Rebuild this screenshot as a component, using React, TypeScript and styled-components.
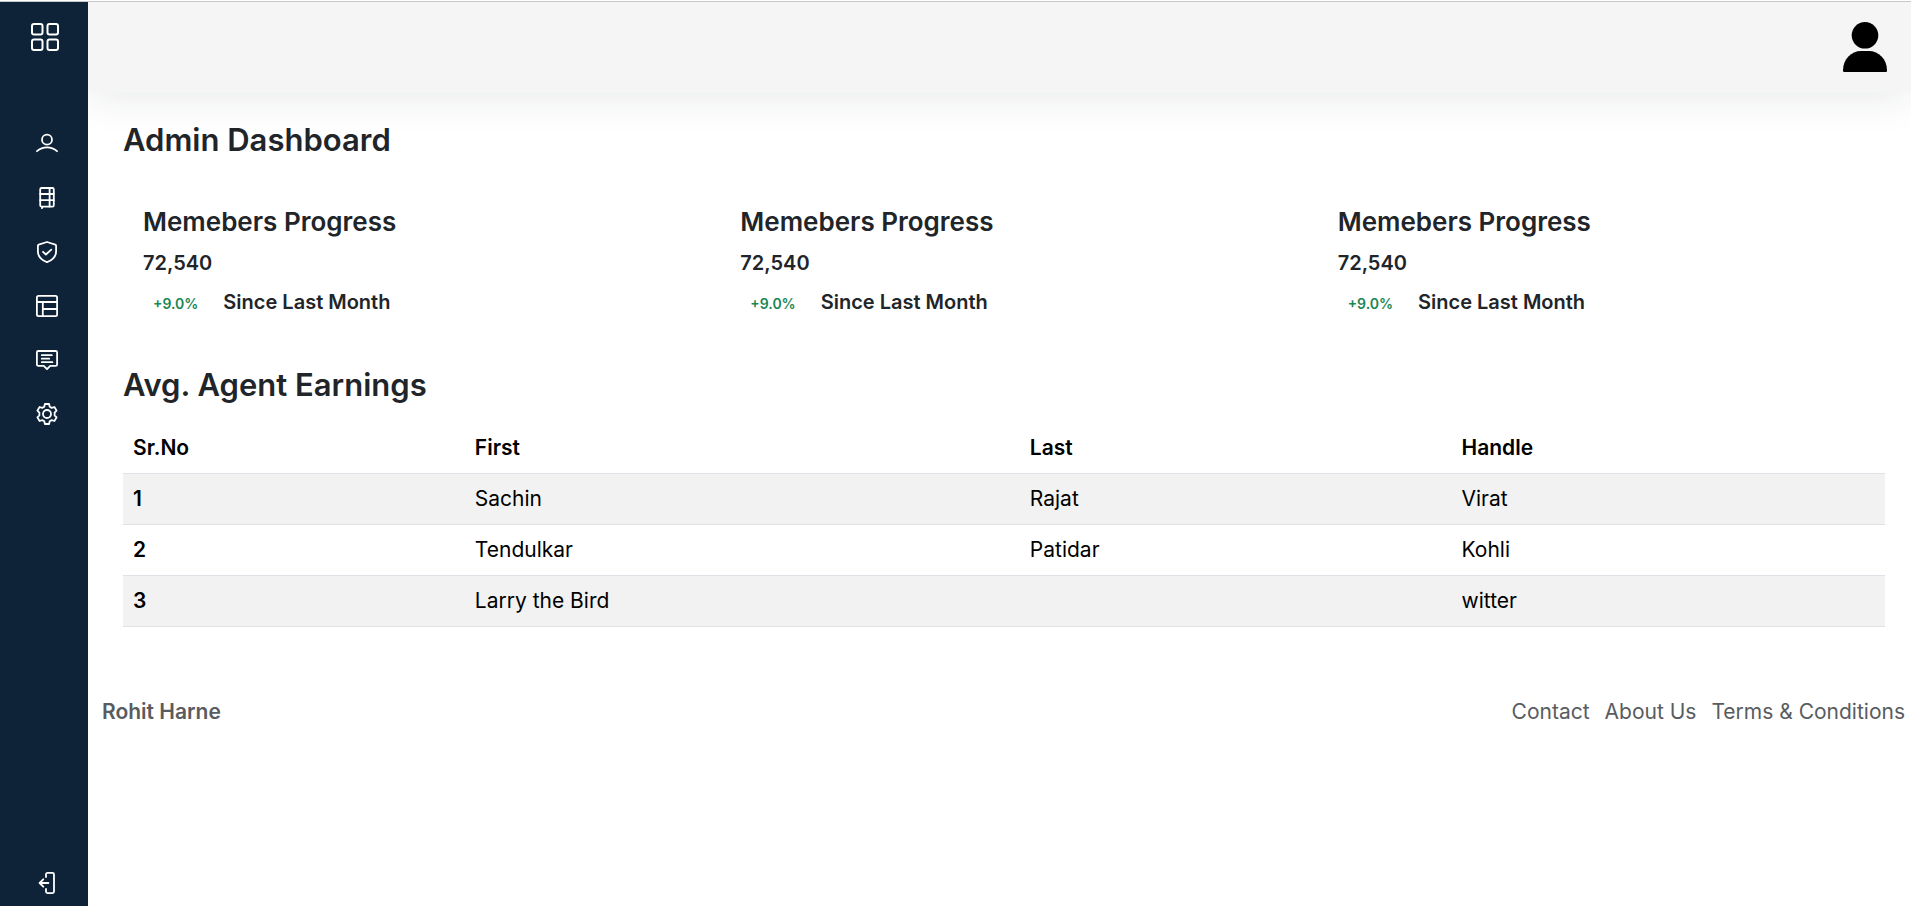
import React from 'react';
import styled, { createGlobalStyle } from 'styled-components';

const GlobalStyle = createGlobalStyle`
  *, *::before, *::after { box-sizing: border-box; }
  body {
    margin: 0;
    background: #fff;
    color: #212529;
    font-family: Inter, "Open Sans", sans-serif;
    font-size: 21px;
    line-height: 30px;
  }
  h1, h2, h3, p, ul { margin: 0; padding: 0; }
  ul { list-style: none; }
`;

const Page = styled.div`
  display: flex;
  flex-direction: column;
  min-height: 100vh;
  padding-top: 1px;
`;

const Shell = styled.div`
  flex: 1;
  display: flex;
  border-top: 1px solid #c6c9c9;
`;

const Sidebar = styled.aside`
  flex: none;
  display: flex;
  flex-direction: column;
  width: 88px;
  background: #0e2238;
`;

const ToggleButton = styled.button`
  display: flex;
  justify-content: center;
  width: 88px;
  height: 70px;
  padding: 20px 0 0 2px;
  border: 0;
  background: transparent;
  color: #fff;
  cursor: pointer;
`;

const SideList = styled.ul`
  flex: 1;
  padding-top: 45px;
`;

const SideLink = styled.a`
  display: flex;
  align-items: center;
  justify-content: center;
  height: 54px;
  padding-left: 5px;
  color: #fff;
`;

const SideFooter = styled.div`
  ${SideLink} { height: 46px; }
`;

const LineIcon = styled.svg`
  display: block;
  fill: none;
  stroke: currentColor;
  stroke-width: 1.8;
  stroke-linecap: round;
  stroke-linejoin: round;
`;

const Main = styled.div`
  flex: 1;
  min-width: 0;
  display: flex;
  flex-direction: column;
`;

const TopBar = styled.header`
  display: flex;
  justify-content: flex-end;
  padding: 20px;
  background: #f5f5f5;
  box-shadow: 0 5px 40px rgba(33, 37, 41, 0.1);
  clip-path: inset(0 0 -80px 0);
`;

const AvatarButton = styled.button`
  display: block;
  padding: 0;
  border: 0;
  background: transparent;
  color: #000;
  cursor: pointer;

  svg { display: block; fill: currentColor; }
`;

const Content = styled.main`
  padding: 30px 26px 0 35px;
`;

const Title = styled.h2`
  font-size: 31px;
  line-height: 36px;
  font-weight: 600;
`;

const CardGrid = styled.div`
  display: grid;
  grid-template-columns: repeat(3, 1fr);
  gap: 30px;
  margin: 30px 0 31px;
`;

const Card = styled.section`
  display: flex;
  flex-direction: column;
  gap: 15px;
  padding: 20px;
  font-size: 20px;
  line-height: 24px;
  font-weight: 600;
`;

const CardTitle = styled.h3`
  font-size: 26px;
  line-height: 28px;
  font-weight: 600;
`;

const CardValue = styled.p`
  color: inherit;
`;

const CardTrend = styled.p`
  display: flex;
  align-items: baseline;
  gap: 25px;
  padding-left: 10px;
`;

const Change = styled.span`
  font-size: 14px;
  color: #198754;
`;

const Table = styled.table`
  width: 100%;
  margin-top: 20px;
  border-collapse: separate;
  border-spacing: 0;
  table-layout: fixed;
  color: #000;
  text-align: left;

  th, td {
    height: 51px;
    padding: 10px;
    border-bottom: 1px solid #dee2e6;
  }
  th { font-weight: 600; }
  tbody tr:nth-child(odd) { background: #f2f2f2; }
`;

const Column = styled.col<{ $share: number }>`
  width: ${(p) => p.$share}%;
`;

const Footer = styled.footer`
  display: flex;
  justify-content: space-between;
  padding: 70px 6px 20px 14px;
  color: #595c5f;
`;

const FooterLinks = styled.ul`
  display: flex;
  gap: 15px;
`;

const FooterLink = styled.a<{ $strong?: boolean }>`
  color: inherit;
  text-decoration: none;
  font-weight: ${(p) => (p.$strong ? 600 : 400)};
`;

const icons: Record<string, React.ReactNode> = {
  Profile: (
    <>
      <circle cx="11" cy="6.7" r="5" />
      <path d="M1 18.2C6.6 13.2 15.4 13.2 21 18.2" />
    </>
  ),
  Agenda: (
    <>
      <path d="M6.600 19.600H5.600a1.400 1.400 0 0 1-1.400-1.400V2.400A1.400 1.400 0 0 1 5.600 1h10.800a1.400 1.400 0 0 1 1.400 1.400v15.800a1.400 1.400 0 0 1-1.400 1.400H6.600L6 21.100" />
      <path d="M13.600 1v18.600M4.200 7h13.600M4.200 13.200h13.600" />
    </>
  ),
  Auth: (
    <>
      <path d="M11 1 19.300 3.600c.6.2.8.6.8 1.200v5.400c0 4.800-3.800 9-9.100 11C5.700 19.200 1.900 15 1.900 10.200V4.800c0-.6.2-1 .8-1.200Z" />
      <path d="m7 10.800 2.900 2.700L15.300 8.600" />
    </>
  ),
  Layout: (
    <>
      <rect x=".9" y=".9" width="20.2" height="20.2" rx="1.6" />
      <path d="M.9 7h20.200M6.800 7v14M6.800 14h14.300" />
    </>
  ),
  Notification: (
    <>
      <path d="M2.300 2h17.400c.8 0 1.400.6 1.400 1.400v12c0 .8-.6 1.400-1.400 1.400h-5.500L11 20.200l-3.200-3.400H2.300c-.8 0-1.400-.6-1.400-1.400v-12C.9 2.600 1.500 2 2.300 2Z" />
      <path d="M5.800 6.200h10M5.800 9.700h7.400M5.800 13.200h10.600" />
    </>
  ),
  Setting: (
    <>
      <circle cx="11" cy="11" r="4" />
      <path d="M8.900 1h4.200l.6 2.800 2 1.100 2.700-.9 2.200 3.600-2 2v2.800l2 2-2.200 3.600-2.700-.9-2 1.100-.6 2.800H8.900l-.6-2.800-2-1.100-2.700.9-2.200-3.600 2-2V9.600l-2-2L3.600 4l2.700.9 2-1.100Z" />
    </>
  ),
  Logout: (
    <>
      <path d="M10 5V2.400c0-.9.6-1.500 1.500-1.500h5c.9 0 1.500.6 1.500 1.500v17.200c0 .9-.6 1.500-1.500 1.500h-5c-.9 0-1.500-.6-1.500-1.500V17" />
      <path d="M12.400 11H3.800M7.300 7.300 3.600 11l3.700 3.700" />
    </>
  ),
};

const navItems = ['Profile', 'Agenda', 'Auth', 'Layout', 'Notification', 'Setting'];

const columns = [
  { name: 'Sr.No', share: 19.4 },
  { name: 'First', share: 31.5 },
  { name: 'Last', share: 24.5 },
  { name: 'Handle', share: 24.6 },
];

const rows = [
  ['1', 'Sachin', 'Rajat', 'Virat'],
  ['2', 'Tendulkar', 'Patidar', 'Kohli'],
  ['3', 'Larry the Bird', '', 'witter'],
];

const cards = [
  { id: 1, title: 'Memebers Progress', value: '72,540', change: '+9.0%' },
  { id: 2, title: 'Memebers Progress', value: '72,540', change: '+9.0%' },
  { id: 3, title: 'Memebers Progress', value: '72,540', change: '+9.0%' },
];

const NavLink = ({ name }: { name: string }) => (
  <SideLink href="#" aria-label={name}>
    <LineIcon width="22" height="22" viewBox="0 0 22 22" aria-hidden="true">
      {icons[name]}
    </LineIcon>
  </SideLink>
);

export default function App() {
  return (
    <>
      <GlobalStyle />
      <Page>
        <Shell>
          <Sidebar>
            <ToggleButton type="button" aria-label="Toggle sidebar">
              <LineIcon width="30" height="30" viewBox="0 0 30 30" aria-hidden="true">
                <rect x="2" y="2" width="10.5" height="10.5" rx="2" strokeWidth="2" />
                <rect x="17.5" y="2" width="10.5" height="10.5" rx="2" strokeWidth="2" />
                <rect x="2" y="17.5" width="10.5" height="10.5" rx="2" strokeWidth="2" />
                <rect x="17.5" y="17.5" width="10.5" height="10.5" rx="2" strokeWidth="2" />
              </LineIcon>
            </ToggleButton>
            <SideList>
              {navItems.map((name) => (
                <li key={name}>
                  <NavLink name={name} />
                </li>
              ))}
            </SideList>
            <SideFooter>
              <NavLink name="Logout" />
            </SideFooter>
          </Sidebar>

          <Main>
            <TopBar>
              <AvatarButton type="button" aria-label="Account">
                <svg width="50" height="50" viewBox="0 0 50 50" aria-hidden="true">
                  <circle cx="24" cy="13.3" r="13.3" />
                  <path d="M2 48.500C2 37 10.500 29 20 29h8c9.500 0 18 8 18 19.500 0 1-.5 1.500-1.500 1.500h-41C2.500 50 2 49.500 2 48.500Z" />
                </svg>
              </AvatarButton>
            </TopBar>

            <Content>
              <Title>Admin Dashboard</Title>
              <CardGrid>
                {cards.map((card) => (
                  <Card key={card.id}>
                    <CardTitle>{card.title}</CardTitle>
                    <CardValue>{card.value}</CardValue>
                    <CardTrend>
                      <Change>{card.change}</Change>
                      <span>Since Last Month</span>
                    </CardTrend>
                  </Card>
                ))}
              </CardGrid>

              <Title>Avg. Agent Earnings</Title>
              <Table>
                <colgroup>
                  {columns.map((column) => (
                    <Column key={column.name} $share={column.share} />
                  ))}
                </colgroup>
                <thead>
                  <tr>
                    {columns.map((column) => (
                      <th key={column.name} scope="col">{column.name}</th>
                    ))}
                  </tr>
                </thead>
                <tbody>
                  {rows.map(([id, ...cells]) => (
                    <tr key={id}>
                      <th scope="row">{id}</th>
                      {cells.map((cell, index) => (
                        <td key={index}>{cell}</td>
                      ))}
                    </tr>
                  ))}
                </tbody>
              </Table>
            </Content>

            <Footer>
              <FooterLink href="#" $strong>Rohit Harne</FooterLink>
              <FooterLinks>
                <li><FooterLink href="#">Contact</FooterLink></li>
                <li><FooterLink href="#">About Us</FooterLink></li>
                <li><FooterLink href="#">Terms &amp; Conditions</FooterLink></li>
              </FooterLinks>
            </Footer>
          </Main>
        </Shell>
      </Page>
    </>
  );
}
